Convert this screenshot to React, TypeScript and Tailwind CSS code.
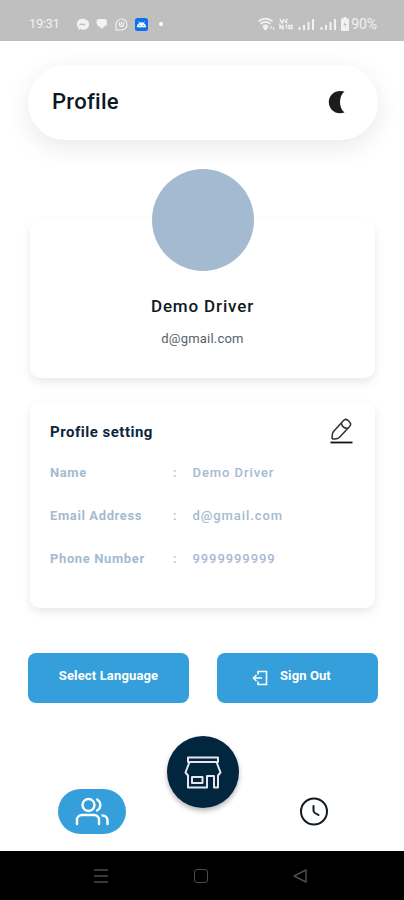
interface DetailRowProps {
  label: string;
  value: string;
}

const details = [
  { label: "Name", value: "Demo Driver" },
  { label: "Email Address", value: "d@gmail.com" },
  { label: "Phone Number", value: "9999999999" },
];

function SignalIcon() {
  return (
    <svg width="17" height="13" viewBox="0 0 17 13" fill="none" stroke="currentColor" strokeWidth="2">
      <path d="M1.5 9v3M6 7v5M10.5 4v8M15 1v11" />
    </svg>
  );
}

function StatusBar() {
  return (
    <header className="flex h-[41px] shrink-0 items-center bg-[#bfbfbf] pt-[7px] pl-[29px] text-[#f2f2f2]">
      <span className="w-[47px] text-[13px] tracking-[-0.4px]">19:31</span>
      <div className="flex items-center gap-[7px]">
        <svg width="13" height="13" viewBox="0 0 13 13" fill="none">
          <path d="M6.5.8a5.6 5.4 0 0 0-4 9.2v2l2-1A5.8 5.5 0 1 0 6.5.8Z" fill="currentColor" />
          <path d="m3.500 7 2-1 1.800.8L9.500 6" stroke="#bfbfbf" strokeWidth="1.300" />
        </svg>
        <svg width="12" height="12" viewBox="0 0 12 12" fill="currentColor">
          <path d="M2 1h6.500A2.500 2.500 0 0 1 11 3.500v2A2.500 2.500 0 0 1 8.500 8L6 11 4.500 9.500 2 8 .5 5V2.500Z" />
        </svg>
        <svg width="13" height="13" viewBox="0 0 13 13" fill="none" stroke="currentColor" strokeWidth="1.200">
          <path d="M1 12V6.500A5.500 5.500 0 1 1 6.500 12Z" />
          <path d="M4.500 4v2.500a2 2 0 0 0 4 0V4M6.500 4v3" />
        </svg>
        <svg width="13" height="13" viewBox="0 0 13 13">
          <rect width="13" height="13" rx="2.500" fill="#0a70ee" />
          <path d="M2.200 9a4.300 4.300 0 0 1 8.600 0ZM3.500 3.500 5 5.500M9.500 3.500 8 5.500" fill="#fff" stroke="#fff" strokeWidth=".7" />
          <circle cx="4.800" cy="7.300" r=".6" fill="#0a70ee" />
          <circle cx="8.200" cy="7.300" r=".6" fill="#0a70ee" />
        </svg>
        <span className="ml-1 size-1 rounded-full bg-white" />
      </div>
      <div className="mr-[27px] ml-auto flex items-center">
        <svg width="17" height="14" viewBox="0 0 17 14" fill="none" stroke="currentColor" strokeWidth="1.700">
          <path d="M.5 4.500a10 10 0 0 1 14 0M2.500 7a7 7 0 0 1 10 0M5 9.500a4 4 0 0 1 5 0" />
          <path d="m6 10.500 1.500 2 1.500-2Z" fill="currentColor" />
          <path d="M13 9v3M15.500 10v3" strokeWidth="1" />
        </svg>
        <svg width="16" height="12" viewBox="0 0 16 12" fill="none" stroke="currentColor" strokeWidth="1.400" className="ml-[4px]">
          <path d="m1 1 2 4 2-4M8.500 1 6 3.500 8.500 5M1 11V7l3 4V7M7.500 6.500v4M10 7.500h3v3h-3z" />
        </svg>
        <span className="ml-[3px]"><SignalIcon /></span>
        <span className="ml-[5px]"><SignalIcon /></span>
        <svg width="8" height="14" viewBox="0 0 8 14" fill="currentColor" className="ml-[4px]">
          <path d="M2.500 0h3v1.500H7a1 1 0 0 1 1 1V13a1 1 0 0 1-1 1H1a1 1 0 0 1-1-1V2.500a1 1 0 0 1 1-1h1.500Z" />
          <path d="M4.500 4 2.500 8H4l-.5 3 2-4H4Z" fill="#bfbfbf" />
        </svg>
        <span className="ml-[2px] text-[14px] leading-none tracking-[-0.1px]">90%</span>
      </div>
    </header>
  );
}

function DetailRow({ label, value }: DetailRowProps) {
  return (
    <div className="flex h-[43px] items-start text-[13px] leading-[18px] text-[#a5bad0]">
      <span className="w-[123px] font-bold tracking-[0.62px]">{label}</span>
      <span className="w-[19.500px] font-medium">:</span>
      <span className="font-medium tracking-[0.92px]">{value}</span>
    </div>
  );
}

function BottomNav() {
  return (
    <nav className="mt-[33px] flex items-start">
      <button className="mt-[53px] ml-[58px] flex h-[45px] w-[68px] items-center justify-center rounded-full bg-[#349fda] text-white">
        <svg width="34" height="30" viewBox="0 0 34 30" fill="none" stroke="currentColor" strokeWidth="2.400" strokeLinecap="round" strokeLinejoin="round">
          <circle cx="13.500" cy="8" r="6" />
          <path d="M2 27v-4a5 5 0 0 1 5-5h12a5 5 0 0 1 5 5v4M22 2.500a6.200 6.200 0 0 1 0 11M27.500 18.500a5 5 0 0 1 5 5V27" />
        </svg>
      </button>
      <button className="ml-[41px] flex size-[72px] items-center justify-center rounded-full bg-[#03263f] shadow-[0_3px_5px_rgba(0,0,0,0.28)]">
        <svg width="38" height="33" viewBox="0 0 38 33" fill="none" stroke="#e4e6ec" strokeWidth="2" strokeLinejoin="round">
          <path d="M4 1.500h30V6H4zM5.500 6 1.500 16.500 4 19.500V31.500h19V20h7v11.500h4v-12l2.500-3L32.500 6M8 21h10.500v6H8z" />
        </svg>
      </button>
      <button className="mt-[61px] ml-[61px] text-[#101a22]">
        <svg width="29" height="29" viewBox="0 0 29 29" fill="none" stroke="currentColor" strokeWidth="2" strokeLinecap="round">
          <circle cx="14" cy="14.500" r="13" />
          <path d="M13.500 9v4.500q0 1.500 1.500 2.500l3.500 2" />
        </svg>
      </button>
    </nav>
  );
}

export default function App() {
  return (
    <div className="flex h-[900px] w-[404px] flex-col overflow-hidden bg-white font-['Roboto',sans-serif]">
      <StatusBar />

      <main className="flex flex-1 flex-col overflow-hidden bg-white">
        {/* Title bar */}
        <div className="mt-6 ml-[28px] flex h-[75px] w-[350px] shrink-0 items-center justify-between rounded-full bg-white pr-[32px] pl-[24px] shadow-[0_7px_26px_rgba(0,0,0,0.09)]">
          <h1 className="-mt-0.5 text-[22px] font-medium tracking-[0.3px] text-[#0b1824]">Profile</h1>
          <svg width="18" height="24" viewBox="0 0 18 24" fill="#1c1c1c" className="-mt-0.5">
            <path d="M16.500 1.500C8 -1 .8 4.500.8 12s7.200 13.500 15.700 10.500C10.500 18 10.500 6 16.500 1.500Z" />
          </svg>
        </div>

        {/* Avatar and name */}
        <div className="relative z-10 mt-[29px] ml-[152px] size-[102px] shrink-0 rounded-full bg-[#a4bad0]" />
        <section className="mt-[-51px] ml-[30px] flex h-[158px] w-[345px] shrink-0 flex-col items-center rounded-[10px] bg-white pt-[74px] shadow-[0_4px_10px_rgba(0,0,0,0.09)]">
          <h2 className="text-[17px] leading-6 font-medium tracking-[0.85px] text-[#101a24]">Demo Driver</h2>
          <p className="mt-[12px] text-[13px] leading-[18px] tracking-[0.2px] text-[#56616a]">d@gmail.com</p>
        </section>

        {/* Profile settings */}
        <section className="mt-[24px] ml-[30px] h-[206px] w-[345px] shrink-0 rounded-[10px] bg-white pl-[20px] shadow-[0_4px_10px_rgba(0,0,0,0.09)]">
          <div className="flex h-[62px] items-start justify-between pt-[16px] pr-[21px]">
            <h3 className="mt-[4px] text-[15px] leading-5 font-bold tracking-[0.5px] text-[#0b263d]">Profile setting</h3>
            <svg width="24" height="26" viewBox="0 0 24 26" fill="none" stroke="#303030" strokeWidth="1.500" strokeLinejoin="round">
              <path d="m3.500 13.500 9.800-10.800q2.200-2.400 4.600-.4l1.500 1.400q2.400 2.300.2 4.700l-9.800 10.700q-1.300 1.400-3 1.600l-3 .4q-1.900.2-1.700-1.800l.3-3q.1-1.700 1.100-2.800ZM11.300 5q1 5.500 6.800 5.500" />
              <path d="M.5 24.500h22" strokeWidth="1.800" stroke="#101010" />
            </svg>
          </div>
          {details.map((detail) => (
            <DetailRow key={detail.label} label={detail.label} value={detail.value} />
          ))}
        </section>

        {/* Actions */}
        <div className="mt-[45px] ml-[28px] flex shrink-0 gap-[28px] text-[13px] leading-[18px] font-bold text-white">
          <button className="h-[50px] w-[161px] rounded-[8px] bg-[#349fda] pb-[4px] tracking-[0.15px]">Select Language</button>
          <button className="flex h-[50px] w-[161px] items-center rounded-[8px] bg-[#349fda] pl-[35px]">
            <svg width="16" height="16" viewBox="0 0 16 16" fill="none" stroke="currentColor" strokeWidth="1.600">
              <path d="M6 4.500V1.500h8.500v13H6V11.500M10 8H1.500M4.500 5l-3 3 3 3" />
            </svg>
            <span className="ml-[12px] pb-[4px] tracking-[0.1px]">Sign Out</span>
          </button>
        </div>

        <BottomNav />
      </main>

      {/* System navigation */}
      <footer className="flex h-[49px] shrink-0 items-center bg-black pl-[94px] text-[#4c4c4c]">
        <svg width="14" height="14" viewBox="0 0 14 14" stroke="currentColor" strokeWidth="1.500">
          <path d="M0 1h14M0 7h14M0 13h14" />
        </svg>
        <span className="ml-[86px] size-[14px] rounded-[3px] border-[1.5px] border-[#4c4c4c]" />
        <svg width="15" height="14" viewBox="0 0 15 14" fill="none" stroke="currentColor" strokeWidth="1.500" strokeLinejoin="round" className="ml-[85px]">
          <path d="M1 7 13 1v12Z" />
        </svg>
      </footer>
    </div>
  );
}
